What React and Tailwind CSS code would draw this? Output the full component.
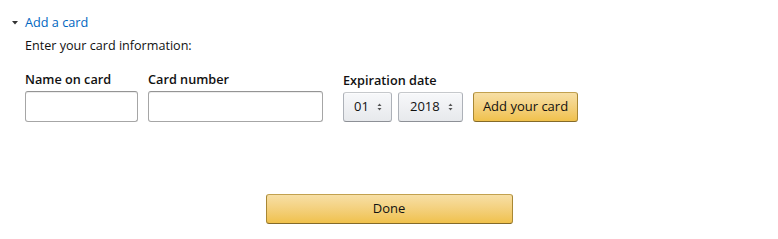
import { useState } from "react";

const selectBox =
    "relative flex items-center h-[30px] rounded-[3px] border border-[#adb1b8] border-t-[#c6c9cc] border-b-[#8d9096] bg-gradient-to-b from-[#f7f8fa] to-[#e7e9ec] text-[13px] text-[#111] shadow-[0_1px_0_rgba(255,255,255,0.6)_inset]";

const yellowBtn =
    "flex items-center justify-center h-[30px] rounded-[3px] border border-[#a88734] border-t-[#c2a14f] border-b-[#846a29] bg-gradient-to-b from-[#f7dfa5] to-[#f0c14b] text-[13px] text-[#111]";

const inputBox =
    "h-[31px] rounded-[3px] border border-[#a6a6a6] border-t-[#949494] shadow-[0_1px_0_rgba(255,255,255,0.5),0_1px_0_rgba(0,0,0,0.07)_inset] px-2 text-[13px] outline-none";

function Arrows() {
    return (
        <svg width="5" height="8" viewBox="0 0 5 8" className="ml-auto">
            <path d="M2.5 0.5 L4.5 3 L0.5 3 Z" fill="#555" />
            <path d="M2.5 7.5 L4.5 5 L0.5 5 Z" fill="#555" />
        </svg>
    );
}

export default function App() {
    const [name, setName] = useState("");
    const [number, setNumber] = useState("");

    return (
        <div className="w-[778px] h-[239px] bg-white font-['Open_Sans',sans-serif] text-[#111]">
            <div className="pl-[12px] pt-[13px]">
                <div className="flex items-center h-[20px]">
                    <svg width="6" height="4" viewBox="0 0 6 4" className="mr-[7px]">
                        <path d="M0 0 L6 0 L3 3.5 Z" fill="#333" />
                    </svg>
                    <span className="text-[12.7px] text-[#0066c0]">Add a card</span>
                </div>
                <div className="pl-[13px] mt-[3px] text-[12.6px] leading-[20px]">
                    Enter your card information:
                </div>

                <div className="flex items-end pl-[13px] mt-[13px]">
                    <div className="flex flex-col w-[113px]">
                        <label className="text-[12.7px] font-semibold leading-[20px] mb-[2px]">Name on card</label>
                        <input value={name} onChange={(e) => setName(e.target.value)} className={inputBox + " w-[113px]"} />
                    </div>
                    <div className="flex flex-col w-[175px] ml-[10px]">
                        <label className="text-[12.7px] font-semibold leading-[20px] mb-[2px]">Card number</label>
                        <input value={number} onChange={(e) => setNumber(e.target.value)} className={inputBox + " w-[175px]"} />
                    </div>
                    <div className="flex flex-col ml-[20px]">
                        <label className="text-[12.7px] font-semibold leading-[20px] mb-[2px]">Expiration date</label>
                        <div className="flex items-center">
                            <div className={selectBox + " w-[49px] pl-[10px] pr-[9px]"}>
                                <span>01</span>
                                <Arrows />
                            </div>
                            <div className={selectBox + " w-[65px] ml-[6px] pl-[11px] pr-[9px]"}>
                                <span>2018</span>
                                <Arrows />
                            </div>
                            <button className={yellowBtn + " w-[105px] ml-[10px]"}>Add your card</button>
                        </div>
                    </div>
                </div>
            </div>

            <div className="flex justify-center mt-[72px]">
                <button className={yellowBtn + " w-[247px]"}>Done</button>
            </div>
        </div>
    );
}
